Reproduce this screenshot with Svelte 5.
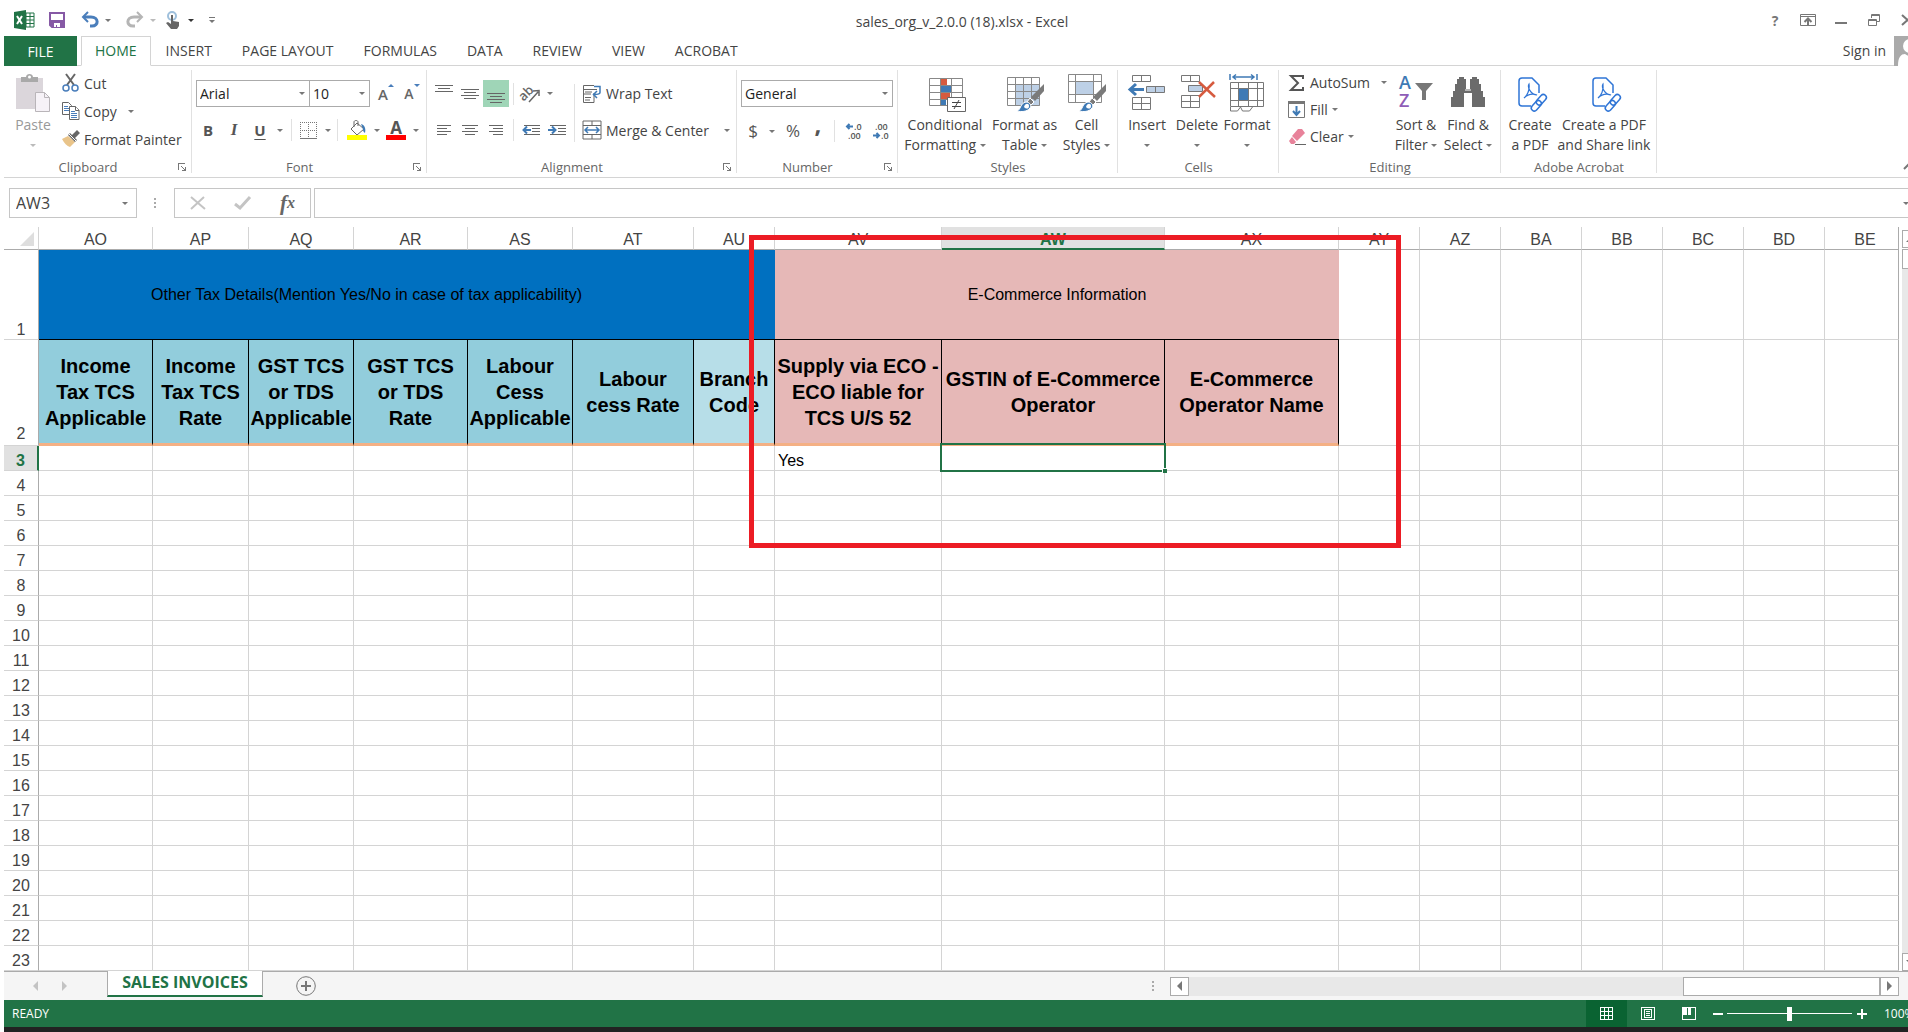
<!--
  Spreadsheet window: title bar, ribbon, formula bar, grid, sheet tabs and status bar.
-->
<script lang="ts">
	interface Column {
		key: string;
		width?: number;
		title?: string[];
		tone?: string;
	}

	const tabs = ['HOME', 'INSERT', 'PAGE LAYOUT', 'FORMULAS', 'DATA', 'REVIEW', 'VIEW', 'ACROBAT'];

	const columns: Column[] = [
		{ key: 'AO', width: 114, title: ['Income', 'Tax TCS', 'Applicable'], tone: 'teal' },
		{ key: 'AP', width: 96, title: ['Income', 'Tax TCS', 'Rate'], tone: 'teal' },
		{ key: 'AQ', width: 105, title: ['GST TCS', 'or TDS', 'Applicable'], tone: 'teal' },
		{ key: 'AR', width: 114, title: ['GST TCS', 'or TDS', 'Rate'], tone: 'teal' },
		{ key: 'AS', width: 105, title: ['Labour', 'Cess', 'Applicable'], tone: 'teal' },
		{ key: 'AT', width: 121, title: ['Labour', 'cess Rate'], tone: 'teal' },
		{ key: 'AU', width: 81, title: ['Branch', 'Code'], tone: 'pale' },
		{ key: 'AV', width: 167, title: ['Supply via ECO -', 'ECO liable for', 'TCS U/S 52'], tone: 'pink' },
		{ key: 'AW', width: 223, title: ['GSTIN of E-Commerce', 'Operator'], tone: 'pink' },
		{ key: 'AX', width: 174, title: ['E-Commerce', 'Operator Name'], tone: 'pink' },
		{ key: 'AY', width: 81 },
		{ key: 'AZ', width: 81 },
		{ key: 'BA', width: 81 },
		{ key: 'BB', width: 81 },
		{ key: 'BC', width: 81 },
		{ key: 'BD', width: 81 },
		{ key: 'BE' }
	];

	const plainColumns = columns.filter((c) => !c.title);
	const rows = Array.from({ length: 21 }, (_, i) => i + 3);
	const values: Record<string, string> = { AV3: 'Yes' };

	let activeTab = $state('HOME');
	let selectedCol = $state('AW');
	let selectedRow = $state(3);
	let font = $state('Arial');
	let size = $state('10');
	let format = $state('General');
	let formula = $state('');
	let zoom = $state(50);
	let cellName = $derived(selectedCol + selectedRow);

	function select(col: string, row: number) {
		selectedCol = col;
		selectedRow = row;
	}
</script>

{#snippet lines(spans: number[][], top: number)}
	<svg width="18" height="18" viewBox="0 0 18 18" stroke="#666" shape-rendering="crispEdges">
		{#each spans as [from, to], i}
			<path d="M{from} {top + i * 3}.5H{to}" />
		{/each}
	</svg>
{/snippet}

{#snippet brush()}
	<path d="M38 10v7l-9 10-4-4z" fill="#7a7a7a" />
	<path d="m24 24 4 4-3 3-4-3z" fill="#7a7a7a" stroke="#fff" />
	<path d="M11 37c4-1 3-8 9-9 4 0 6 4 4 6-3 4-9 4-13 3z" fill="#3f7ab5" stroke="#fff" />
	<path d="M18 33c1-4 5-4 5-1s-2 3-4 2z" fill="#fff" />
{/snippet}

{#snippet pdfIcon()}
	<svg width="42" height="38" viewBox="-8 0 42 38" fill="none" stroke="#2f75d6" stroke-width="1.5">
		<path d="M14 32H5a3 3 0 0 1-3-3V7a3 3 0 0 1 3-3h10l7 7v8" />
		<path d="M12 10c-2 3 2 11 8 11-5-2-10 0-13 3 3-2 6-8 5-14z" stroke-width="1.2" />
		<rect x="22" y="20" width="6" height="12" rx="3" transform="rotate(42 25 25)" />
		<rect x="17" y="26" width="6" height="12" rx="3" transform="rotate(42 20 31)" />
	</svg>
{/snippet}

{#snippet launcher()}
	<button class="launcher" aria-label="More options">
		<svg width="8" height="8" viewBox="0 0 8 8" fill="none" stroke="#777" shape-rendering="crispEdges">
			<path d="M.5 7V.5H7M3 3l4 4M7.5 4v3.5H4" />
		</svg>
	</button>
{/snippet}

<div class="viewport">
	<div class="window">
		<header class="titlebar">
			<div class="quick">
				<svg width="21" height="20" viewBox="0 0 21 20">
					<path d="M12 3h8v14h-8z" fill="#fff" stroke="#217346" />
					<path d="M12 6.500h8M12 10h8M12 13.500h8M16 3v14" stroke="#217346" fill="none" />
					<path d="M0 2 12 0v20L0 18z" fill="#217346" />
					<path d="m3 6 5 8M8 6l-5 8" stroke="#fff" stroke-width="2" />
				</svg>
				<button class="save" aria-label="Save">
					<svg width="16" height="16" viewBox="0 0 16 16">
						<path d="M1 1h14v14H3l-2-2z" fill="#fff" stroke="#8659a5" stroke-width="2" />
						<path d="M2 8h12v7H2z" fill="#8659a5" />
						<path d="M5 11h6v4H8v-2H7v2H5z" fill="#fff" />
					</svg>
				</button>
				<button class="undo" aria-label="Undo">
					<svg width="18" height="16" viewBox="0 0 18 16" fill="none" stroke="#4a7ebb" stroke-width="3">
						<path d="M3 5h7c8 0 8 9 1 9H9" />
						<path d="M7 0 2 5l5 5" stroke-width="2" />
					</svg>
				</button>
				<span class="caret"></span>
				<button class="redo" aria-label="Redo">
					<svg width="18" height="16" viewBox="0 0 18 16" fill="none" stroke="#b5b5b5" stroke-width="3">
						<path d="M15 5H8C0 5 0 14 7 14h2" />
						<path d="m11 0 5 5-5 5" stroke-width="2" />
					</svg>
				</button>
				<span class="caret faint"></span>
				<button class="touch" aria-label="Touch mode">
					<svg width="15" height="18" viewBox="0 0 15 18">
						<circle cx="6" cy="5" r="4" fill="none" stroke="#9fc0dc" stroke-width="2" />
						<path d="M5 4h2v6l6 1v4l-2 3H5l-5-6 2-1 3 2z" fill="#666" />
					</svg>
				</button>
				<span class="caret dark"></span>
				<button class="customize" aria-label="Customize toolbar">
					<span class="bar"></span>
					<span class="caret"></span>
				</button>
			</div>
			<div class="caption">sales_org_v_2.0.0 (18).xlsx - Excel</div>
			<div class="controls">
				<button aria-label="Help"><b>?</b></button>
				<button aria-label="Ribbon display options">
					<svg width="16" height="12" viewBox="0 0 16 12" fill="none" stroke="#777">
						<path d="M.5.5h15v11H.5zM0 2.500h16" />
						<path d="M8 11V5M4.500 8 8 4.500 11.500 8" stroke-width="2" />
					</svg>
				</button>
				<button aria-label="Minimize">
					<svg width="16" height="12" viewBox="0 0 16 12"><path d="M2 8h12v2H2z" fill="#777" /></svg>
				</button>
				<button aria-label="Restore">
					<svg width="14" height="13" viewBox="0 0 14 13" fill="none" stroke="#777">
						<path d="M4.500 4V.5h8v7H9M4 1.500h9M1.500 5.500h8v6h-8zM1 6.500h9" />
					</svg>
				</button>
				<button aria-label="Close">
					<svg width="13" height="12" viewBox="0 0 13 12" stroke="#777" stroke-width="2"><path d="m1 1 11 10M12 1 1 11" /></svg>
				</button>
			</div>
		</header>

		<nav class="tabs">
			<button class="file">FILE</button>
			{#each tabs as tab (tab)}
				<button class="tab" class:active={tab === activeTab} onclick={() => (activeTab = tab)}>{tab}</button>
			{/each}
			<a class="signin" href="#signin">Sign in</a>
			<svg class="avatar" width="26" height="30" viewBox="0 0 26 30">
				<path d="M0 0h26v30H0z" fill="#aaa" />
				<circle cx="16" cy="10" r="7" fill="#fff" />
				<path d="M4 30c0-9 3-12 7-12 4 3 7 3 11 0l4 2v10z" fill="#fff" />
			</svg>
		</nav>

		<section class="ribbon">
			<div class="group clipboard">
				<div class="body">
					<button class="big paste">
						<svg width="36" height="38" viewBox="0 0 36 38">
							<path d="M1 4h27v31H1z" fill="#dbd6db" />
							<path d="M6 3h5c0-4 7-4 7 0h5v5H6z" fill="#a9a9a9" />
							<circle cx="14.500" cy="3" r="1.500" fill="#fff" />
							<path d="M20.500 18.500h9l5 5v14h-14z" fill="#f6f2f7" stroke="#b9b5b9" />
							<path d="M29.500 18.500v5h5" fill="none" stroke="#b9b5b9" />
						</svg>
						<span>Paste</span>
						<span><i class="caret faint"></i></span>
					</button>
					<div class="stack">
						<button class="row">
							<svg width="18" height="18" viewBox="0 0 18 18" fill="none">
								<path d="M4 0 12 11M13 0 5 11" stroke="#666" stroke-width="2" />
								<circle cx="4" cy="14" r="3" stroke="#4a7ebb" stroke-width="1.500" />
								<circle cx="13" cy="14" r="3" stroke="#4a7ebb" stroke-width="1.500" />
							</svg>
							Cut
						</button>
						<button class="row">
							<svg width="18" height="18" viewBox="0 0 18 18" fill="#fff" stroke="#666">
								<path d="M.5.5h6l3 3v9h-9z" />
								<path d="M2 4.500h4M2 6.500h5M2 8.500h5" stroke="#4a7ebb" />
								<path d="M7.500 4.500h6l3.500 3.500v9.500h-9.500z" />
								<path d="M13.500 4.500v4H17" />
								<path d="M9 9.500h4M9 11.500h6M9 13.500h6M9 15.500h6" stroke="#4a7ebb" />
							</svg>
							Copy <i class="caret spaced"></i>
						</button>
						<button class="row">
							<svg width="18" height="18" viewBox="0 0 18 18">
								<path d="m0 9 6-3 7 6-5 5c-3-1-6-4-8-8z" fill="#e9c48a" />
								<path d="m6 5 2-2 2 2 5-5 3 3-5 5 2 2-2 2z" fill="#666" />
								<path d="m7 4 7 7" stroke="#fff" />
							</svg>
							Format Painter
						</button>
					</div>
				</div>
				<div class="label">Clipboard</div>
				{@render launcher()}
			</div>

			<div class="group fonts">
				<div class="body two-rows">
					<div class="combos">
						<label class="combo face">
							<select aria-label="Font" bind:value={font}><option>Arial</option><option>Calibri</option></select>
						</label>
						<label class="combo size">
							<select aria-label="Font size" bind:value={size}><option>10</option><option>11</option></select>
						</label>
						<button class="grow" aria-label="Increase font size">A<svg width="6" height="3" viewBox="0 0 6 3"><path d="M3 0 6 3H0z" fill="#4a7ebb" /></svg></button>
						<button class="grow less" aria-label="Decrease font size">A<svg width="6" height="3" viewBox="0 0 6 3"><path d="M0 0h6L3 3z" fill="#4a7ebb" /></svg></button>
					</div>
					<div class="tools font-tools">
						<button class="glyph bold">B</button>
						<button class="glyph italic">I</button>
						<button class="glyph under">U</button>
						<i class="caret"></i>
						<i class="sep"></i>
						<button aria-label="Borders">
							<svg width="17" height="17" viewBox="0 0 17 17" fill="none" stroke="#777" shape-rendering="crispEdges">
								<path d="M0 .5h17M.5 0v16M16.500 0v16M8.500 0v16M0 8.500h17" stroke-dasharray="1 1" />
								<path d="M0 16.500h17" />
							</svg>
						</button>
						<i class="caret"></i>
						<i class="sep"></i>
						<button aria-label="Fill color">
							<svg width="20" height="20" viewBox="0 0 20 20">
								<path d="m10 3 7 6-7 6-6-6z" fill="#fff" stroke="#666" />
								<path d="M7 7V2c0-2 4-2 4 0v4" fill="none" stroke="#666" />
								<path d="M14 4c4 1 5 5 4 9-2-1-2-3-2-4z" fill="#3f7ab5" />
								<path d="M0 15h20v5H0z" fill="#ff0" />
							</svg>
						</button>
						<i class="caret"></i>
						<button class="ink" aria-label="Font color"><b>A</b></button>
						<i class="caret"></i>
					</div>
				</div>
				<div class="label">Font</div>
				{@render launcher()}
			</div>

			<div class="group alignment">
				<div class="body">
					<div class="two-rows">
						<div class="tools align-tools">
							<button aria-label="Top align">{@render lines([[0, 18], [3, 15], [0, 18]], 0)}</button>
							<button aria-label="Middle align">{@render lines([[0, 18], [3, 15], [0, 18], [3, 15]], 4)}</button>
							<button class="pressed" aria-label="Bottom align">{@render lines([[0, 18], [3, 15], [0, 18], [3, 15]], 8)}</button>
							<i class="sep"></i>
							<button aria-label="Orientation">
								<svg width="20" height="18" viewBox="0 0 20 18">
									<text x="-2" y="12" transform="rotate(-45 6 9)" font-size="13" font-weight="600" fill="#666">ab</text>
									<path d="m8 17 9-10M12 6l6-.5V11" fill="none" stroke="#666" stroke-width="1.500" />
								</svg>
							</button>
							<i class="caret"></i>
						</div>
						<div class="tools indent-tools">
							<button aria-label="Align left">{@render lines([[2, 16], [2, 12], [2, 16], [2, 12]], 4)}</button>
							<button aria-label="Center">{@render lines([[1, 17], [4, 14], [1, 17], [4, 14]], 4)}</button>
							<button aria-label="Align right">{@render lines([[2, 16], [6, 16], [2, 16], [6, 16]], 4)}</button>
							<i class="sep"></i>
							<button aria-label="Decrease indent">
								<svg width="18" height="12" viewBox="0 0 18 12" fill="none" stroke="#666">
									<path d="M2 1.500h16M10 4.500h8M10 7.500h8M2 10.500h16" />
									<path d="M1 6h8M5 2.500 1.500 6 5 9.500" stroke="#3f7ab5" stroke-width="2" />
								</svg>
							</button>
							<button aria-label="Increase indent">
								<svg width="18" height="12" viewBox="0 0 18 12" fill="none" stroke="#666">
									<path d="M2 1.500h16M10 4.500h8M10 7.500h8M2 10.500h16" />
									<path d="M0 6h8M4 2.500 7.500 6 4 9.500" stroke="#3f7ab5" stroke-width="2" />
								</svg>
							</button>
						</div>
					</div>
					<i class="divider"></i>
					<div class="two-rows">
						<button class="row wide">
							<svg width="20" height="20" viewBox="0 0 20 20" fill="none" stroke="#666">
								<path d="M12 1.500H1.500v17H12V9M1 5.500h14M1 10h8M3 8h7M3 13.500h6M3 16h5" />
								<path d="M12 2.500h6v6c0 2-3 2-6 2M15 7l-3.500 3.500L15 14" stroke="#3f7ab5" stroke-width="1.500" />
							</svg>
							Wrap Text
						</button>
						<button class="row wide">
							<svg width="20" height="20" viewBox="0 0 20 20" fill="none" stroke="#666">
								<path d="M1 1h18v18H1zM1 5.500h18M1 14.500h18M10 1v4M10 15v4" />
								<path d="M3 10h14M6 7l-3 3 3 3M14 7l3 3-3 3" stroke="#3f7ab5" stroke-width="1.500" />
							</svg>
							Merge &amp; Center <i class="caret far"></i>
						</button>
					</div>
				</div>
				<div class="label">Alignment</div>
				{@render launcher()}
			</div>

			<div class="group number">
				<div class="body two-rows">
					<label class="combo">
						<select aria-label="Number format" bind:value={format}><option>General</option><option>Text</option></select>
					</label>
					<div class="tools number-tools">
						<button class="symbol">$</button>
						<i class="caret"></i>
						<button class="symbol">%</button>
						<button class="symbol comma">,</button>
						<i class="sep"></i>
						<button aria-label="Increase decimal">
							<svg width="18" height="18" viewBox="0 0 18 18" font-size="9" font-weight="600" fill="#555">
								<text x="9" y="8">.0</text>
								<text x="3" y="17">.00</text>
								<path d="M2 4.500h6M4.500 2 2 4.500 4.500 7" fill="none" stroke="#3f7ab5" stroke-width="2" />
							</svg>
						</button>
						<button aria-label="Decrease decimal">
							<svg width="18" height="18" viewBox="0 0 18 18" font-size="9" font-weight="600" fill="#555">
								<text x="3" y="8">.00</text>
								<text x="9" y="17">.0</text>
								<path d="M1 13.500h6M4.500 11 7 13.500 4.500 16" fill="none" stroke="#3f7ab5" stroke-width="2" />
							</svg>
						</button>
					</div>
				</div>
				<div class="label">Number</div>
				{@render launcher()}
			</div>

			<div class="group styles">
				<div class="body">
					<button class="big">
						<svg width="42" height="38" viewBox="-4 0 42 38" fill="none">
							<path d="M1.500 4.500h33v27h-33zM1 11.500h34M1 18.500h34M1 25.500h34M12.500 4v28M23.500 4v28" stroke="#888" />
							<path d="M13 5h6v6h-6zM13 19h9v6h-9z" fill="#d65b3f" />
							<path d="M13 12h10v6H13zM13 26h5v5h-5z" fill="#3f7ab5" />
							<path d="M19.500 23.500h18v14h-18z" fill="#fff" stroke="#666" />
							<path d="M24 28.500h9M24 32.500h9M31 26l-5 9" stroke="#444" />
						</svg>
						<span>Conditional</span>
						<span>Formatting <i class="caret"></i></span>
					</button>
					<button class="big">
						<svg width="38" height="38" viewBox="0 0 38 38" fill="none">
							<path d="M10 11h24v21H10z" fill="#bdd0e6" />
							<path d="M1.500 3.500h32v28h-32zM1 10.500h33M1 17.500h33M1 24.500h33M9.500 3v29M17.500 3v29M25.500 3v29" stroke="#888" />
							{@render brush()}
						</svg>
						<span>Format as</span>
						<span>Table <i class="caret"></i></span>
					</button>
					<button class="big">
						<svg width="38" height="38" viewBox="0 0 38 38" fill="none">
							<path d="M8 8h17v12H8z" fill="#bdd0e6" />
							<path d="M.5.5h33v28H.5zM0 7.500h34M0 20.500h34M7.500 0v29M25.500 0v29" stroke="#888" />
							{@render brush()}
						</svg>
						<span>Cell</span>
						<span>Styles <i class="caret"></i></span>
					</button>
				</div>
				<div class="label plain">Styles</div>
			</div>

			<div class="group cells">
				<div class="body">
					<button class="big">
						<svg width="38" height="38" viewBox="0 0 38 38" fill="none" stroke="#777">
							<path d="M4.500 1.500h18v6h-18zM13.500 1v7M4.500 23.500h18v12h-18zM4 29.500h19M13.500 23v13" />
							<path d="M18.500 12.500h18v6h-18zM27.500 12v7" fill="#bdd0e6" />
							<path d="M3 15.500h13M8 10l-6 5.500L8 21" stroke="#3f7ab5" stroke-width="3" />
						</svg>
						<span>Insert</span>
						<span><i class="caret"></i></span>
					</button>
					<button class="big">
						<svg width="38" height="38" viewBox="0 0 38 38" fill="none" stroke="#777">
							<path d="M3.500 1.500h18v6h-18zM12.500 1v7M3.500 21.500h18v12h-18zM3 27.500h19M12.500 21v13" />
							<path d="M10.500 11.500h14v6h-14z" fill="#bdd0e6" />
							<path d="m21 8 16 15M36 8 21 23" stroke="#d65b3f" stroke-width="2.500" />
						</svg>
						<span>Delete</span>
						<span><i class="caret"></i></span>
					</button>
					<button class="big">
						<svg width="38" height="38" viewBox="0 0 38 38" fill="none" stroke="#777">
							<path d="M2 0v6M29 0v6M5 3h21M8 .5 5 3l3 2.500M23 .5 26 3l-3 2.500" stroke="#3f7ab5" stroke-width="1.500" />
							<path d="M2.500 8.500h33v24h-33zM2 14.500h34M2 26.500h34M10.500 8v25M20.500 8v25M29.500 8v25M2.500 33v4h7l3-4 2 4h7l3-4" />
							<path d="M11 15h9v11h-9z" fill="#3f7ab5" stroke="none" />
						</svg>
						<span>Format</span>
						<span><i class="caret"></i></span>
					</button>
				</div>
				<div class="label plain">Cells</div>
			</div>

			<div class="group editing">
				<div class="body">
					<div class="stack">
						<button class="row">
							<svg width="18" height="18" viewBox="0 0 18 18" fill="none" stroke="#555" stroke-width="2">
								<path d="M15 5V2H3l7 7-7 7h12v-3" />
							</svg>
							AutoSum <i class="caret spaced"></i>
						</button>
						<button class="row">
							<svg width="18" height="18" viewBox="0 0 18 18" fill="none">
								<path d="M.5.5h16v16H.5z" stroke="#777" />
								<path d="M0 0h17v3H0z" fill="#777" />
								<path d="M8.500 5v9M5 10l3.500 4 3.500-4" stroke="#3f7ab5" stroke-width="2" />
							</svg>
							Fill <i class="caret"></i>
						</button>
						<button class="row">
							<svg width="18" height="18" viewBox="0 0 18 18">
								<path d="M10 1h4l3 4-8 8-5-5z" fill="#e8829a" />
								<path d="m4 9 4 5-2 2H3l-2-3z" fill="#e8829a" />
								<path d="M7 16.500h11" stroke="#666" />
							</svg>
							Clear <i class="caret"></i>
						</button>
					</div>
					<button class="big">
						<svg width="38" height="38" viewBox="0 0 38 38" font-size="18" font-weight="600">
							<text x="2" y="15" fill="#3f7ab5">A</text>
							<text x="2" y="33" fill="#8f5db7">Z</text>
							<path d="M18 9h18l-7 8v9h-4v-9z" fill="#777" />
						</svg>
						<span>Sort &amp;</span>
						<span>Filter <i class="caret"></i></span>
					</button>
					<button class="big">
						<svg width="38" height="38" viewBox="0 0 38 38" fill="#6b6b6b">
							<path d="M10 3h5v2h2v10h4V5h2V3h5v2h2v5h2v7h2v6h2v10H23V19h-8v14H2V23h2v-6h2v-7h2V5h2z" />
							<path d="M16 16h6" stroke="#fff" />
						</svg>
						<span>Find &amp;</span>
						<span>Select <i class="caret"></i></span>
					</button>
				</div>
				<div class="label plain">Editing</div>
			</div>

			<div class="group acrobat">
				<div class="body">
					<button class="big">
						{@render pdfIcon()}
						<span>Create</span>
						<span>a PDF</span>
					</button>
					<button class="big">
						{@render pdfIcon()}
						<span>Create a PDF</span>
						<span>and Share link</span>
					</button>
				</div>
				<div class="label plain">Adobe Acrobat</div>
			</div>

			<button class="collapse" aria-label="Collapse the ribbon">
				<svg width="12" height="8" viewBox="0 0 12 8" fill="none" stroke="#777" stroke-width="2"><path d="m1 7 5-5 5 5" /></svg>
			</button>
		</section>

		<section class="formula-bar">
			<div class="name-box">
				<input aria-label="Name box" value={cellName} />
				<i class="caret"></i>
			</div>
			<i class="dots"></i>
			<div class="entry">
				<button aria-label="Cancel">
					<svg width="16" height="14" viewBox="0 0 16 14" stroke="#c4c4c4" stroke-width="2"><path d="m1 1 14 12M14 1 1 13" /></svg>
				</button>
				<button aria-label="Enter">
					<svg width="17" height="14" viewBox="0 0 17 14" fill="none" stroke="#c4c4c4" stroke-width="3"><path d="m1 8 5 4L16 1" /></svg>
				</button>
				<button class="fx" aria-label="Insert function">f<small>x</small></button>
			</div>
			<div class="formula">
				<input aria-label="Formula" bind:value={formula} />
				<i class="caret"></i>
			</div>
		</section>

		<section class="sheet">
			<table>
				<colgroup>
					<col class="row-head" />
					{#each columns as col (col.key)}
						<col style:width={col.width ? `${col.width}px` : 'auto'} />
					{/each}
				</colgroup>
				<thead>
					<tr>
						<th class="corner" aria-label="Select all">
							<svg width="14" height="14" viewBox="0 0 14 14"><path d="M14 0v14H0z" fill="#dedede" /></svg>
						</th>
						{#each columns as col (col.key)}
							<th class:chosen={col.key === selectedCol}>{col.key}</th>
						{/each}
					</tr>
				</thead>
				<tbody>
					<tr class="band">
						<th>1</th>
						<td class="tax" colspan="7">Other Tax Details(Mention Yes/No in case of tax applicability)</td>
						<td class="ecom" colspan="3">E-Commerce Information</td>
						{#each plainColumns as col (col.key)}<td></td>{/each}
					</tr>
					<tr class="titles">
						<th>2</th>
						{#each columns as col (col.key)}
							<td class={col.tone}>
								{#each col.title ?? [] as line}<div>{line}</div>{/each}
							</td>
						{/each}
					</tr>
					{#each rows as row (row)}
						<tr>
							<th class:chosen={row === selectedRow}>{row}</th>
							{#each columns as col (col.key)}
								<td
									class:selected={col.key === selectedCol && row === selectedRow}
									onclick={() => select(col.key, row)}
								>{values[col.key + row] ?? ''}</td>
							{/each}
						</tr>
					{/each}
				</tbody>
			</table>
			<div class="vscroll">
				<button aria-label="Scroll up"><i class="arrow up"></i></button>
				<div class="thumb"></div>
				<div class="track"></div>
				<button aria-label="Scroll down"><i class="arrow down"></i></button>
			</div>
			<div class="highlight"></div>
		</section>

		<section class="sheet-bar">
			<button class="step" aria-label="Previous sheet"><i class="arrow left"></i></button>
			<button class="step" aria-label="Next sheet"><i class="arrow right"></i></button>
			<button class="sheet-tab">SALES INVOICES</button>
			<button class="add" aria-label="New sheet">
				<svg width="20" height="20" viewBox="0 0 20 20" fill="none" stroke="#777">
					<circle cx="10" cy="10" r="9.300" />
					<path d="M10 5v10M5 10h10" stroke-width="2" />
				</svg>
			</button>
			<i class="dots"></i>
			<div class="hscroll">
				<button aria-label="Scroll left"><i class="arrow left"></i></button>
				<div class="track"></div>
				<div class="thumb"></div>
				<button aria-label="Scroll right"><i class="arrow right"></i></button>
			</div>
		</section>

		<footer class="status">
			<span class="ready">READY</span>
			<button class="view on" aria-label="Normal view">
				<svg width="14" height="14" viewBox="0 0 14 14" fill="none" stroke="#fff" shape-rendering="crispEdges">
					<path d="M.5.5h12v12H.5zM0 4.500h13M0 8.500h13M4.500 0v13M8.500 0v13" />
				</svg>
			</button>
			<button class="view" aria-label="Page layout view">
				<svg width="14" height="14" viewBox="0 0 14 14" fill="none" stroke="#fff" shape-rendering="crispEdges">
					<path d="M.5.5h13v12H.5zM3.500 2.500h7v8h-7zM5 4.500h4M5 6.500h4M5 8.500h4" />
				</svg>
			</button>
			<button class="view" aria-label="Page break preview">
				<svg width="14" height="14" viewBox="0 0 14 14" shape-rendering="crispEdges">
					<path d="M.5.5h13v12H.5z" fill="none" stroke="#fff" />
					<path d="M1 1h4v7H1zM6 1h3v7H6z" fill="#fff" />
				</svg>
			</button>
			<button class="minus" aria-label="Zoom out"></button>
			<input class="zoom" type="range" min="0" max="100" aria-label="Zoom" bind:value={zoom} />
			<button class="plus" aria-label="Zoom in"></button>
			<span class="percent">100%</span>
		</footer>
		<div class="taskbar"></div>
	</div>
</div>

<style>
	:global(body) {
		background: #fff;
	}

	.viewport {
		overflow: hidden;
		font-family: 'Open Sans', 'Noto Sans', sans-serif;
		font-size: 14px;
		color: #444;
	}

	/* the window runs a little past the right screen edge */
	.window {
		width: calc(100% + 8px);
		margin-left: 4px;
	}

	button,
	input,
	select {
		padding: 0;
		border: 0;
		background: none;
		font: inherit;
		color: inherit;
	}

	button {
		display: flex;
		align-items: center;
		justify-content: center;
		white-space: nowrap;
	}

	svg {
		display: block;
		flex: none;
		overflow: visible;
	}

	.caret {
		display: inline-block;
		flex: none;
		width: 0;
		height: 0;
		border: 3px solid transparent;
		border-top-color: #777;
		border-bottom: 0;
		vertical-align: 3px;
	}

	.caret.faint {
		border-top-color: #bbb;
	}

	.caret.dark {
		border-top-color: #333;
	}

	.caret.spaced {
		margin-left: 7px;
	}

	.caret.far {
		margin-left: 11px;
	}

	/* title bar */
	.titlebar {
		display: grid;
		grid-template-columns: 1fr auto 1fr;
		height: 36px;
	}

	.quick {
		display: flex;
		align-items: center;
		padding: 4px 0 0 10px;
	}

	.save {
		margin-left: 14px;
	}

	.undo {
		margin: 0 6px 0 16px;
	}

	.redo {
		margin: 0 6px 0 15px;
	}

	.touch {
		margin: 0 7px 0 10px;
	}

	.customize {
		flex-direction: column;
		gap: 2px;
		margin-left: 15px;
	}

	.bar {
		width: 6px;
		height: 1px;
		background: #777;
	}

	.caption {
		padding-top: 8px;
		line-height: 28px;
	}

	.controls {
		display: flex;
		justify-content: flex-end;
		align-items: center;
		gap: 17px;
		padding: 4px 5px 0 0;
	}

	.controls button {
		width: 16px;
		color: #777;
	}

	/* ribbon tabs */
	.tabs {
		display: flex;
		height: 30px;
		box-shadow: inset 0 -1px #d4d4d4;
	}

	.tab {
		padding: 0 15px 2px;
	}

	.tab.active {
		border: 1px solid #d4d4d4;
		border-bottom-color: #fff;
		padding: 0 13px 2px;
		color: #217346;
	}

	.file {
		width: 73px;
		margin-right: 4px;
		background: #217346;
		color: #fff;
	}

	.signin {
		margin: 0 8px 0 auto;
		color: #444;
		line-height: 30px;
		text-decoration: none;
	}

	/* ribbon */
	.ribbon {
		display: flex;
		border-bottom: 1px solid #d4d4d4;
	}

	.group {
		position: relative;
		height: 111px;
		padding-left: 4px;
		box-sizing: border-box;
	}

	.group::after {
		content: '';
		position: absolute;
		top: 4px;
		right: 0;
		bottom: 4px;
		width: 1px;
		background: #e1e1e1;
	}

	.clipboard {
		width: 188px;
	}

	.fonts {
		width: 235px;
	}

	.alignment {
		width: 310px;
	}

	.number {
		width: 161px;
	}

	.styles {
		width: 220px;
	}

	.cells {
		width: 161px;
	}

	.editing {
		width: 222px;
	}

	.acrobat {
		width: 156px;
	}

	.body {
		display: flex;
		height: 91px;
	}

	.label {
		padding-right: 24px;
		color: #666;
		font-size: 13px;
		line-height: 20px;
		text-align: center;
	}

	.label.plain {
		padding-right: 4px;
	}

	.launcher {
		position: absolute;
		right: 6px;
		bottom: 6px;
	}

	.big {
		display: flex;
		flex-direction: column;
		justify-content: flex-start;
		padding-top: 8px;
		line-height: 20px;
	}

	.big svg {
		margin-bottom: 3px;
	}

	.big span {
		min-height: 20px;
	}

	.paste {
		width: 50px;
		color: #999;
	}

	.styles .big:nth-child(1) {
		width: 86px;
	}

	.styles .big:nth-child(2) {
		width: 73px;
	}

	.styles .big:nth-child(3) {
		width: 51px;
	}

	.cells .big {
		width: 50px;
	}

	.editing .stack {
		width: 104px;
		padding-left: 5px;
	}

	.editing .row {
		height: 27px;
	}

	.editing .big:nth-child(2) {
		width: 48px;
	}

	.editing .big:nth-child(3) {
		width: 56px;
	}

	.acrobat .big:nth-child(1) {
		width: 50px;
	}

	.acrobat .big:nth-child(2) {
		width: 98px;
	}

	.stack {
		padding-top: 3px;
	}

	.clipboard .stack {
		padding-left: 4px;
	}

	.row {
		justify-content: flex-start;
		gap: 4px;
		height: 28px;
	}

	.row.wide {
		height: 27px;
	}

	.row.wide:last-child {
		height: 22px;
	}

	.two-rows {
		display: flex;
		flex-direction: column;
		gap: 12px;
		height: 77px;
		padding-top: 14px;
	}

	.combos {
		display: flex;
	}

	.combo {
		position: relative;
		height: 27px;
		border: 1px solid #ababab;
		box-sizing: border-box;
		color: #222;
	}

	.combo::after {
		content: '';
		position: absolute;
		top: 11px;
		right: 4px;
		border: 3px solid transparent;
		border-top-color: #777;
		border-bottom: 0;
		pointer-events: none;
	}

	.combo select {
		width: 100%;
		height: 100%;
		padding-left: 3px;
		appearance: none;
	}

	.face {
		width: 114px;
	}

	.size {
		width: 61px;
		margin: 0 3px 0 -1px;
	}

	.number .combo {
		width: 152px;
	}

	.grow {
		width: 26px;
		align-items: flex-start;
		padding-top: 4px;
		box-sizing: border-box;
		color: #666;
		font-size: 15px;
		font-weight: 600;
		line-height: 20px;
	}

	.grow.less {
		font-size: 14px;
	}

	.tools {
		display: grid;
		align-items: center;
		justify-items: center;
		height: 22px;
	}

	.font-tools {
		grid-template-columns: 24px 28px 24px 16px 7px 27px 12px 7px 32px 8px 30px 9px;
	}

	.align-tools {
		grid-template-columns: 26px 26px 26px 9px 25px 14px;
		height: 27px;
	}

	.indent-tools {
		grid-template-columns: 26px 26px 26px 9px 26px 26px;
	}

	.number-tools {
		grid-template-columns: 24px 14px 28px 22px 11px 28px 26px;
	}

	.sep {
		width: 1px;
		height: 22px;
		background: #e1e1e1;
	}

	.divider {
		width: 1px;
		height: 58px;
		margin: 18px 7px 0 4px;
		background: #e1e1e1;
	}

	.pressed {
		width: 26px;
		height: 27px;
		background: #9fd5b7;
	}

	.glyph {
		color: #555;
		font-size: 15px;
		font-weight: 700;
		line-height: 20px;
	}

	.italic {
		font-family: 'Liberation Serif', serif;
		font-size: 17px;
		font-style: italic;
	}

	.under {
		text-decoration: underline;
		text-underline-offset: 3px;
	}

	.ink {
		width: 20px;
		height: 20px;
		border-bottom: 5px solid #f00;
		box-sizing: border-box;
		color: #555;
		font-size: 17px;
		line-height: 15px;
	}

	.symbol {
		color: #555;
		font-size: 17px;
		line-height: 22px;
	}

	.comma {
		padding-bottom: 14px;
		font-size: 24px;
		font-weight: 700;
		line-height: 10px;
	}

	.collapse {
		align-self: flex-end;
		margin: 0 5px 7px auto;
	}

	/* formula bar */
	.formula-bar {
		display: flex;
		padding: 10px 0 9px 5px;
	}

	.name-box,
	.entry,
	.formula {
		display: flex;
		align-items: center;
		height: 30px;
		border: 1px solid #c6c6c6;
		box-sizing: border-box;
	}

	.name-box {
		width: 128px;
		padding: 0 8px 0 6px;
		font-size: 16px;
	}

	.name-box input,
	.formula input {
		flex: 1;
		min-width: 0;
	}

	.dots {
		align-self: center;
		width: 2px;
		height: 10px;
		background: repeating-linear-gradient(#aaa 0 2px, transparent 2px 4px);
	}

	.formula-bar .dots {
		margin: 0 18px 0 17px;
	}

	.entry {
		width: 137px;
	}

	.entry button {
		flex: 1;
	}

	.fx {
		color: #666;
		font: italic bold 21px/24px 'Liberation Serif', serif;
	}

	.fx small {
		font-size: 16px;
	}

	.formula {
		flex: 1;
		margin-left: 3px;
		padding: 0 10px 0 6px;
	}

	/* grid */
	.sheet {
		position: relative;
		display: flex;
		font-family: 'Liberation Sans', Arial, sans-serif;
		font-size: 16px;
	}

	table {
		flex: 1;
		width: 0;
		table-layout: fixed;
		border-collapse: separate;
		border-spacing: 0;
		color: #000;
	}

	.row-head {
		width: 35px;
	}

	th,
	td {
		height: 25px;
		padding: 0 3px;
		border-right: 1px solid #d4d4d4;
		border-bottom: 1px solid #d4d4d4;
		box-sizing: border-box;
		line-height: 18px;
		text-align: left;
		vertical-align: bottom;
		white-space: nowrap;
	}

	th {
		color: #444;
		font-weight: 400;
		text-align: center;
	}

	thead th {
		height: 23px;
		border-bottom-color: #ababab;
	}

	thead .corner {
		padding: 0 4px 3px;
	}

	.corner svg {
		margin-left: auto;
	}

	tbody th {
		padding: 0;
		border-right-color: #ababab;
	}

	tr > :last-child {
		border-right-color: #ababab;
	}

	/* last column is cut short by the scroll bar */
	thead th:last-child {
		padding-left: 10px;
	}

	.chosen {
		background: #e1e1e1;
		color: #217346;
		font-weight: 700;
	}

	thead .chosen {
		border-bottom: 2px solid #217346;
		line-height: 17px;
	}

	tbody .chosen {
		border-right: 2px solid #217346;
	}

	.band > * {
		height: 90px;
	}

	.titles > * {
		height: 106px;
	}

	.titles th {
		padding-bottom: 2px;
	}

	.band .tax,
	.band .ecom {
		border-right: 0;
		border-bottom-color: #000;
		text-align: center;
		vertical-align: middle;
	}

	/* the merged cell starts one column further left, out of view */
	.band .tax {
		padding-right: 84px;
		background: #0070c0;
	}

	.ecom {
		background: #e6b8b7;
	}

	.teal,
	.pale,
	.pink {
		padding: 0;
		border-right-color: #000;
		border-bottom: 3px solid #f4b084;
		font-size: 20px;
		font-weight: 700;
		line-height: 26px;
		text-align: center;
		vertical-align: middle;
	}

	.teal {
		background: #92cddc;
	}

	.pale {
		background: #b7dee8;
	}

	.pink {
		background: #e6b8b7;
	}

	.selected {
		position: relative;
	}

	.selected::before {
		content: '';
		position: absolute;
		inset: -3px -2px -2px;
		border: 2px solid #217346;
	}

	.selected::after {
		content: '';
		position: absolute;
		right: -3px;
		bottom: -3px;
		width: 4px;
		height: 4px;
		border: 1px solid #fff;
		border-width: 1px 0 0 1px;
		background: #217346;
	}

	.highlight {
		position: absolute;
		top: 8px;
		left: 745px;
		width: 652px;
		height: 313px;
		border: 5px solid #ec1c24;
		box-sizing: border-box;
		pointer-events: none;
	}

	.vscroll {
		display: flex;
		flex-direction: column;
		width: 18px;
		padding: 3px 0 0 3px;
	}

	.vscroll button,
	.vscroll .thumb {
		height: 18px;
		border: 1px solid #ababab;
		box-sizing: border-box;
	}

	.vscroll .thumb {
		height: 20px;
		margin-top: 1px;
	}

	.track {
		flex: 1;
		background: #e8e8e8;
	}

	.arrow {
		border: 5px solid transparent;
	}

	.arrow.left {
		border-right-color: #777;
		border-left: 0;
	}

	.arrow.right {
		border-left-color: #777;
		border-right: 0;
	}

	.arrow.up {
		border-bottom-color: #777;
		border-top: 0;
	}

	.arrow.down {
		border-top-color: #777;
		border-bottom: 0;
	}

	/* sheet tabs */
	.sheet-bar {
		display: flex;
		align-items: center;
		height: 29px;
		padding: 0 21px 0 26px;
		border-top: 1px solid #ababab;
		box-sizing: border-box;
		background: #f5f5f5;
	}

	.step {
		width: 10px;
		margin-right: 19px;
		opacity: 0.4;
	}

	.sheet-tab {
		align-self: flex-start;
		min-width: 156px;
		height: 26px;
		margin: -1px 0 0 19px;
		padding: 0 11px 2px;
		border: 1px solid #ababab;
		border-top: 0;
		border-bottom: 2px solid #217346;
		box-sizing: border-box;
		background: #fff;
		color: #217346;
		font-size: 16px;
		font-weight: 700;
	}

	.add {
		margin-left: 33px;
	}

	.sheet-bar .dots {
		margin: 0 16px 0 auto;
	}

	.hscroll {
		display: flex;
		width: 39%;
		height: 19px;
	}

	.hscroll button,
	.hscroll .thumb {
		width: 19px;
		border: 1px solid #ababab;
		box-sizing: border-box;
		background: #fff;
	}

	.hscroll .thumb {
		width: 27%;
	}

	/* status bar */
	.status {
		display: flex;
		align-items: center;
		height: 27px;
		padding: 0 6px 0 8px;
		background: #217346;
		color: #fff;
		font-size: 12px;
	}

	.ready {
		margin-right: auto;
	}

	.view {
		width: 41px;
		height: 27px;
	}

	.view.on {
		background: #0a6332;
	}

	.minus,
	.plus {
		width: 18px;
		height: 14px;
		background: linear-gradient(#fff, #fff) center / 10px 2px no-repeat;
	}

	.plus {
		width: 20px;
		background:
			linear-gradient(#fff, #fff) center / 10px 2px no-repeat,
			linear-gradient(#fff, #fff) center / 2px 10px no-repeat;
	}

	.zoom {
		width: 125px;
		height: 14px;
		margin: 0;
		appearance: none;
		background: linear-gradient(#fff, #fff) center / 100% 1px no-repeat;
	}

	.zoom::-webkit-slider-thumb {
		width: 5px;
		height: 14px;
		appearance: none;
		background: #fff;
	}

	.percent {
		width: 30px;
		margin-left: 12px;
	}

	.taskbar {
		height: 5px;
		background: #222;
	}
</style>
